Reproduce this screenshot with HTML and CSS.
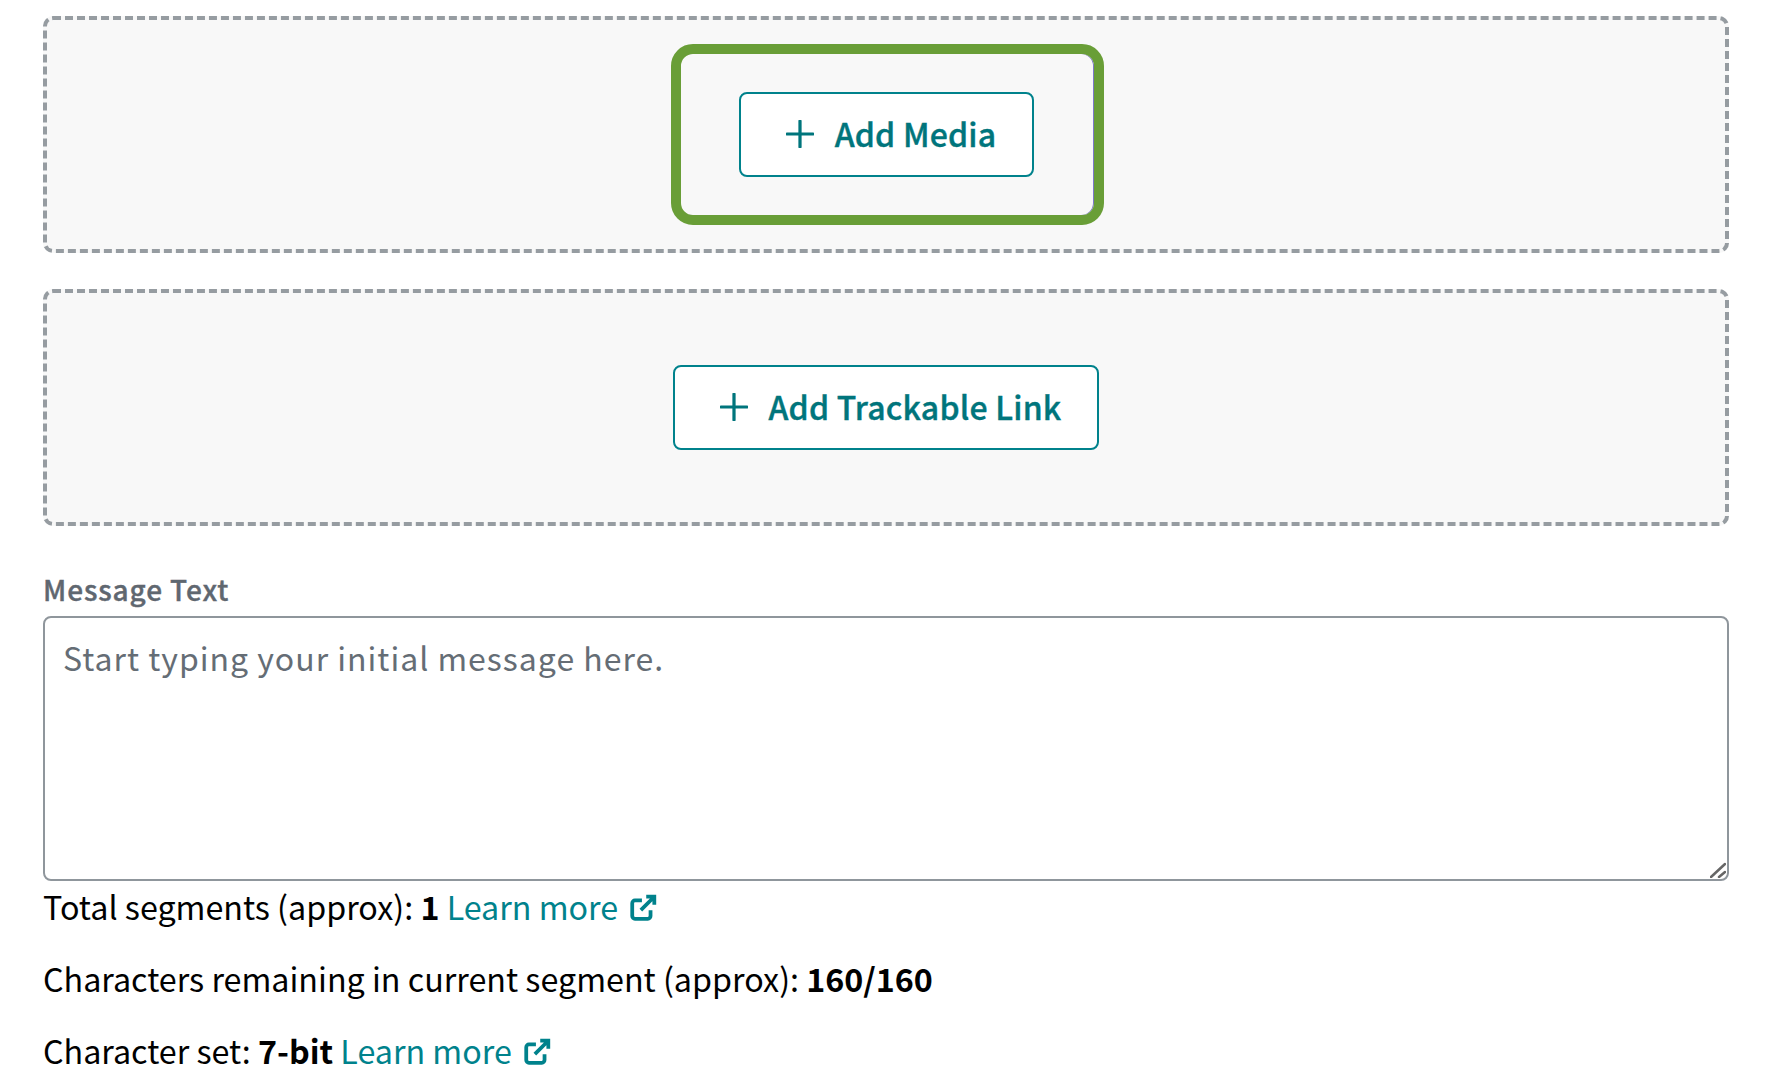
FILE: index.html
```html
<!DOCTYPE html>
<html lang="en">
<head>
    <meta charset="UTF-8">
    <meta name="viewport" content="width=device-width, initial-scale=1.0">
    <title>Message Text</title>
    <link rel="stylesheet" href="styles.css">
</head>
<body>
    <main class="composer">
        <div class="dropzone">
            <div class="highlight">
                <button class="add-btn" type="button">
                    <svg class="plus-icon" viewBox="1 1 26 26"><path d="M14 2v24M2 14h24"/></svg>
                    <span class="btn-label">Add Media</span>
                </button>
            </div>
        </div>

        <div class="dropzone">
            <button class="add-btn" type="button">
                <svg class="plus-icon" viewBox="1 1 26 26"><path d="M14 2v24M2 14h24"/></svg>
                <span class="btn-label">Add Trackable Link</span>
            </button>
        </div>

        <label class="field-label" for="message">Message Text</label>
        <div class="message-wrap">
            <textarea class="message-input" id="message" placeholder="Start typing your initial message here."></textarea>
            <svg class="resize-grip" viewBox="0 0 16 16"><path d="M1 15 15 2M9 15l6-5"/></svg>
        </div>

        <p class="meta meta-first">Total segments (approx): <b>1</b> <a href="#">Learn more <svg class="ext-icon" viewBox="0 0 26 26"><path d="M12 6H5.500A2.500 2.500 0 0 0 3 8.500v12A2.500 2.500 0 0 0 5.500 23h12a2.500 2.500 0 0 0 2.500-2.500V15"/><path d="M11 15 23 3M16 2.500h7.500V10"/></svg></a></p>
        <p class="meta">Characters remaining in current segment (approx): <b>160/160</b></p>
        <p class="meta">Character set: <b>7-bit</b> <a href="#">Learn more <svg class="ext-icon" viewBox="0 0 26 26"><path d="M12 6H5.500A2.500 2.500 0 0 0 3 8.500v12A2.500 2.500 0 0 0 5.500 23h12a2.500 2.500 0 0 0 2.500-2.500V15"/><path d="M11 15 23 3M16 2.500h7.500V10"/></svg></a></p>
    </main>
</body>
</html>
```

FILE: styles.css
```css
* {
    box-sizing: border-box;
}

html, body {
    margin: 0;
    height: 100%;
    overflow: hidden;
    background-color: #fff;
}

body {
    font-family: "Noto Sans CJK SC", "Noto Sans", sans-serif;
    font-size: 32.25px;
    line-height: 44px;
    color: #000;
}

.composer {
    display: flex;
    flex-direction: column;
    padding: 16px 48px 0 43px;
}

.dropzone {
    display: flex;
    align-items: center;
    justify-content: center;
    height: 237px;
    margin-bottom: 36px;
    background-color: #f8f8f8;
    border: 4px dashed #969ca1;
    border-radius: 10px;
}

.dropzone + .dropzone {
    margin-bottom: 43px;
}

.highlight {
    margin-left: 3px;
    padding: 38px 60px 38px 58px;
    border: 10px solid #699e37;
    border-radius: 22px;
    box-shadow: inset -1px 0 0 #7d78c8;
}

.add-btn {
    display: flex;
    align-items: center;
    gap: 21px;
    height: 85px;
    padding: 0 36px 2px 45px;
    font-family: inherit;
    font-size: 32px;
    font-weight: 500;
    letter-spacing: 0.2px;
    -webkit-text-stroke: 0.4px #00757c;
    color: #00757c;
    background-color: #fff;
    border: 2px solid #00828c;
    border-radius: 8px;
}

.btn-label {
    padding-bottom: 2px;
}

.plus-icon {
    width: 28px;
    height: 28px;
    fill: none;
    stroke: #00757c;
    stroke-width: 3;
    stroke-linecap: round;
}

.field-label {
    font-size: 28px;
    line-height: 40px;
    font-weight: 500;
    letter-spacing: 0.9px;
    -webkit-text-stroke: 0.4px #5f6770;
    color: #5f6770;
    margin-bottom: 7px;
}

.message-wrap {
    position: relative;
    height: 265px;
}

.message-input {
    display: block;
    width: 100%;
    height: 100%;
    padding: 17px 18px;
    font-family: inherit;
    font-size: 32px;
    line-height: 44px;
    letter-spacing: 1px;
    color: #000;
    background-color: #fff;
    border: 2px solid #8f969c;
    border-radius: 8px;
    outline: none;
    resize: none;
}

.message-input::placeholder {
    color: #656d75;
    opacity: 1;
}

.resize-grip {
    position: absolute;
    right: 3px;
    bottom: 3px;
    width: 16px;
    height: 16px;
    fill: none;
    stroke: #666;
    stroke-width: 2.500;
    stroke-linecap: round;
}

.meta {
    margin: 0 0 28px;
}

.meta-first {
    margin-top: 3px;
}

.meta a {
    color: #00828c;
    text-decoration: none;
}

.ext-icon {
    width: 28px;
    height: 28px;
    margin-left: 4px;
    vertical-align: -2px;
    fill: none;
    stroke: #00828c;
    stroke-width: 3.500;
}
```
